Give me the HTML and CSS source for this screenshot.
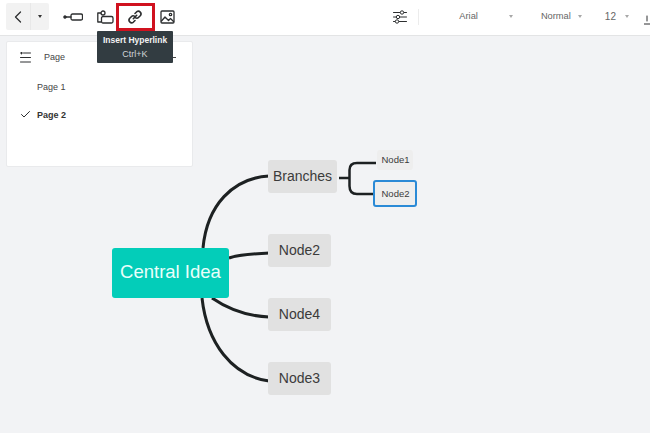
FILE: index.html
```
<!DOCTYPE html>
<html lang="en">
<head>
<meta charset="utf-8">
<title>Mind map editor</title>
<link rel="stylesheet" href="styles.css">
</head>
<body>
<div class="app">
  <header class="toolbar">
    <div class="nav-group">
      <span class="nav-back"><svg width="10" height="14" viewBox="0 0 10 14"><path d="M7.500 2 L2.500 7 L7.500 12" class="ico"/></svg></span>
      <span class="nav-more"><i class="caret dark"></i></span>
    </div>
    <span class="tool t-conn"><svg width="20" height="12" viewBox="0 0 20 12"><circle cx="2" cy="6" r="1.500" class="ico fill"/><path d="M3.500 6H8" class="ico"/><rect x="8" y="3" width="11.500" height="6" rx="1.500" class="ico"/></svg></span>
    <span class="tool t-sub"><svg width="18" height="14" viewBox="0 0 18 14"><circle cx="7" cy="3" r="2" class="ico"/><path d="M5 3H1.800V12H5" class="ico"/><rect x="5.500" y="6.500" width="11.500" height="6.500" rx="1.500" class="ico"/></svg></span>
    <span class="tool t-link"><svg width="16" height="16" viewBox="0 0 16 16"><path d="M6.300 9.700 L9.700 6.300" class="ico bold"/><path d="M8 4.500 L9.800 2.700 A2.700 2.700 0 0 1 13.500 6.500 L11.700 8.300 A2.700 2.700 0 0 1 8.300 8.700" class="ico bold"/><path d="M8 11.500 L6.200 13.300 A2.700 2.700 0 0 1 2.500 9.500 L4.300 7.700 A2.700 2.700 0 0 1 7.700 7.300" class="ico bold"/></svg></span>
    <span class="tool t-img"><svg width="15" height="14" viewBox="0 0 15 14"><rect x="1" y="1" width="13" height="12" rx="1" class="ico"/><path d="M1.500 11 L5 7 L8.500 10.500 L10.500 8.500 L13.500 11.500" class="ico"/><circle cx="10.500" cy="4.500" r="1.200" class="ico"/></svg></span>
    <span class="tool t-sliders"><svg width="14" height="14" viewBox="0 0 14 14"><path d="M0.500 2.500H13.500M0.500 7H13.500M0.500 11.500H13.500" class="ico thin"/><circle cx="9" cy="2.500" r="1.700" class="knob"/><circle cx="5" cy="7" r="1.700" class="knob"/><circle cx="4" cy="11.500" r="1.700" class="knob"/></svg></span>
    <span class="divider"></span>
    <span class="select s-font">Arial<i class="caret"></i></span>
    <span class="select s-weight">Normal<i class="caret"></i></span>
    <span class="select s-size">12<i class="caret"></i></span>
    <span class="t-clip"><svg width="6" height="14" viewBox="0 0 6 14"><path d="M3 4V9M0 12H6" class="ico thin"/></svg></span>
  </header>
  <main class="canvas">
    <svg class="links" width="650" height="397" viewBox="0 36 650 397">
      <path d="M203 248C207 205 233 178 269 176"/>
      <path d="M229 258C240 254 252 254 269 253"/>
      <path d="M212 298C228 309 245 316 269 317"/>
      <path d="M202 298C207 343 232 376 269 381"/>
      <path d="M339 178H349.500M349.500 178V170C349.500 165 352 163 357 163H376M349.500 178V186C349.500 191 352 194 357 194H374" class="thin-link"/>
    </svg>
    <aside class="panel">
      <div class="panel-head">
        <svg width="11" height="11" viewBox="0 0 11 11"><path d="M3.500 1H10.500M0.500 5.500H10.500M0.500 10H10.500M0.500 1H2.500M1.500 0V2" class="ico thin"/></svg>
        <span>Page</span>
      </div>
      <div class="page-row">Page 1</div>
      <div class="page-row current"><svg width="9" height="7" viewBox="0 0 9 7"><path d="M0.500 3.500 L3 6 L8.500 0.500" class="ico thin"/></svg>Page 2</div>
    </aside>
    <span class="panel-plus"></span>
    <div class="tooltip"><b>Insert Hyperlink</b><span>Ctrl+K</span></div>
    <div class="node root">Central Idea</div>
    <div class="node n-branches">Branches</div>
    <div class="node n-2">Node2</div>
    <div class="node n-4">Node4</div>
    <div class="node n-3">Node3</div>
    <div class="node sub n-s1">Node1</div>
    <div class="node sub n-s2">Node2</div>
  </main>
</div>
</body>
</html>
```
FILE: styles.css
```
* { box-sizing: border-box; }
html, body { margin: 0; height: 100%; overflow: hidden; }
body { font-family: "Liberation Sans", Arial, sans-serif; color: #333; }
.app { width: 650px; height: 433px; display: flex; flex-direction: column; background: #f2f3f5; overflow: hidden; }
.toolbar { height: 36px; flex: none; display: flex; align-items: center; background: #fff; border-bottom: 1px solid #e3e4e5; padding-left: 6px; white-space: nowrap; }
.ico { fill: none; stroke: #2d2f30; stroke-width: 1.300; stroke-linecap: round; stroke-linejoin: round; }
.ico.thin { stroke-width: 1; }
.ico.bold { stroke-width: 1.600; }
.ico.fill { fill: #2d2f30; stroke-width: 0.500; }
.knob { fill: #fff; stroke: #2d2f30; stroke-width: 1; }
.nav-group { display: flex; width: 43px; height: 27px; background: #f2f2f2; border-radius: 2px; margin-top: -2px; }
.nav-back { width: 25px; display: flex; align-items: center; justify-content: center; border-right: 1px solid #e8e8e8; }
.nav-more { flex: 1; display: flex; align-items: center; justify-content: center; }
.caret { display: inline-block; width: 0; height: 0; border: 2.500px solid transparent; border-top: 3px solid #a8a8a8; border-bottom: 0; }
.caret.dark { border-top-color: #333; }
.tool { display: flex; align-items: center; justify-content: center; margin-top: -2px; }
.t-conn { margin-left: 14px; }
.t-sub { margin-left: 13px; }
.t-link { width: 40px; height: 28px; margin-left: 2px; border: 3px solid #d0121f; }
.t-img { margin-left: 5px; }
.t-sliders { margin-left: 218px; }
.divider { width: 1px; height: 16px; background: #ececec; margin-left: 11px; margin-top: -2px; }
.select { display: flex; align-items: center; font-size: 9.300px; color: #666; margin-top: -3px; }
.s-font { margin-left: 40px; gap: 31px; }
.s-weight { margin-left: 28px; gap: 7px; }
.s-size { margin-left: 23px; gap: 9px; font-size: 10px; }
.t-clip { margin-left: 15px; display: flex; margin-top: 2px; }
.canvas { position: relative; flex: 1; }
.links { position: absolute; left: 0; top: 0; }
.links path { fill: none; stroke: #1d2122; stroke-width: 3; stroke-linecap: butt; }
.links .thin-link { stroke-width: 2.500; }
.panel { position: absolute; left: 6px; top: 5px; width: 187px; height: 126px; background: #fff; border: 1px solid #e9eaec; border-radius: 2px; font-size: 9px; color: #444; }
.panel-head { display: flex; align-items: center; height: 30px; padding-left: 13px; gap: 13px; margin-bottom: 1px; }
.page-row { position: relative; height: 28px; line-height: 28px; padding-left: 30px; }
.page-row.current { font-weight: bold; color: #333; }
.page-row svg { position: absolute; left: 14px; top: 10px; }
.panel-plus { position: absolute; left: 168px; top: 21px; width: 8px; height: 1px; background: #444; }
.tooltip { position: absolute; left: 97px; top: -5px; width: 76px; height: 32px; background: #323c41; color: #d0d4d6; font-size: 8.500px; border-radius: 1px; display: flex; flex-direction: column; align-items: center; justify-content: center; gap: 3px; line-height: 11px; }
.tooltip b { color: #f2f2f2; }
.tooltip span { font-size: 9px; }
.node { position: absolute; display: flex; align-items: center; justify-content: center; background: #e1e1e1; border-radius: 3px; font-size: 14px; color: #3b3b3b; padding-bottom: 1px; }
.root { left: 112px; top: 212px; width: 117px; height: 50px; background: #03cdb9; color: #e9fffb; font-size: 18.500px; padding-bottom: 2px; }
.n-branches { left: 268px; top: 124px; width: 69px; height: 33px; }
.n-2 { left: 268px; top: 198px; width: 63px; height: 33px; }
.n-4 { left: 268px; top: 262px; width: 63px; height: 33px; }
.n-3 { left: 268px; top: 326px; width: 63px; height: 33px; }
.sub { font-size: 9.500px; padding-left: 1px; }
.n-s1 { left: 377px; top: 114px; width: 36px; height: 20px; background: #eeeeee; }
.n-s2 { left: 373px; top: 144px; width: 44px; height: 27px; background: #eeeeee; border: 2px solid #2b8ad6; }
```
